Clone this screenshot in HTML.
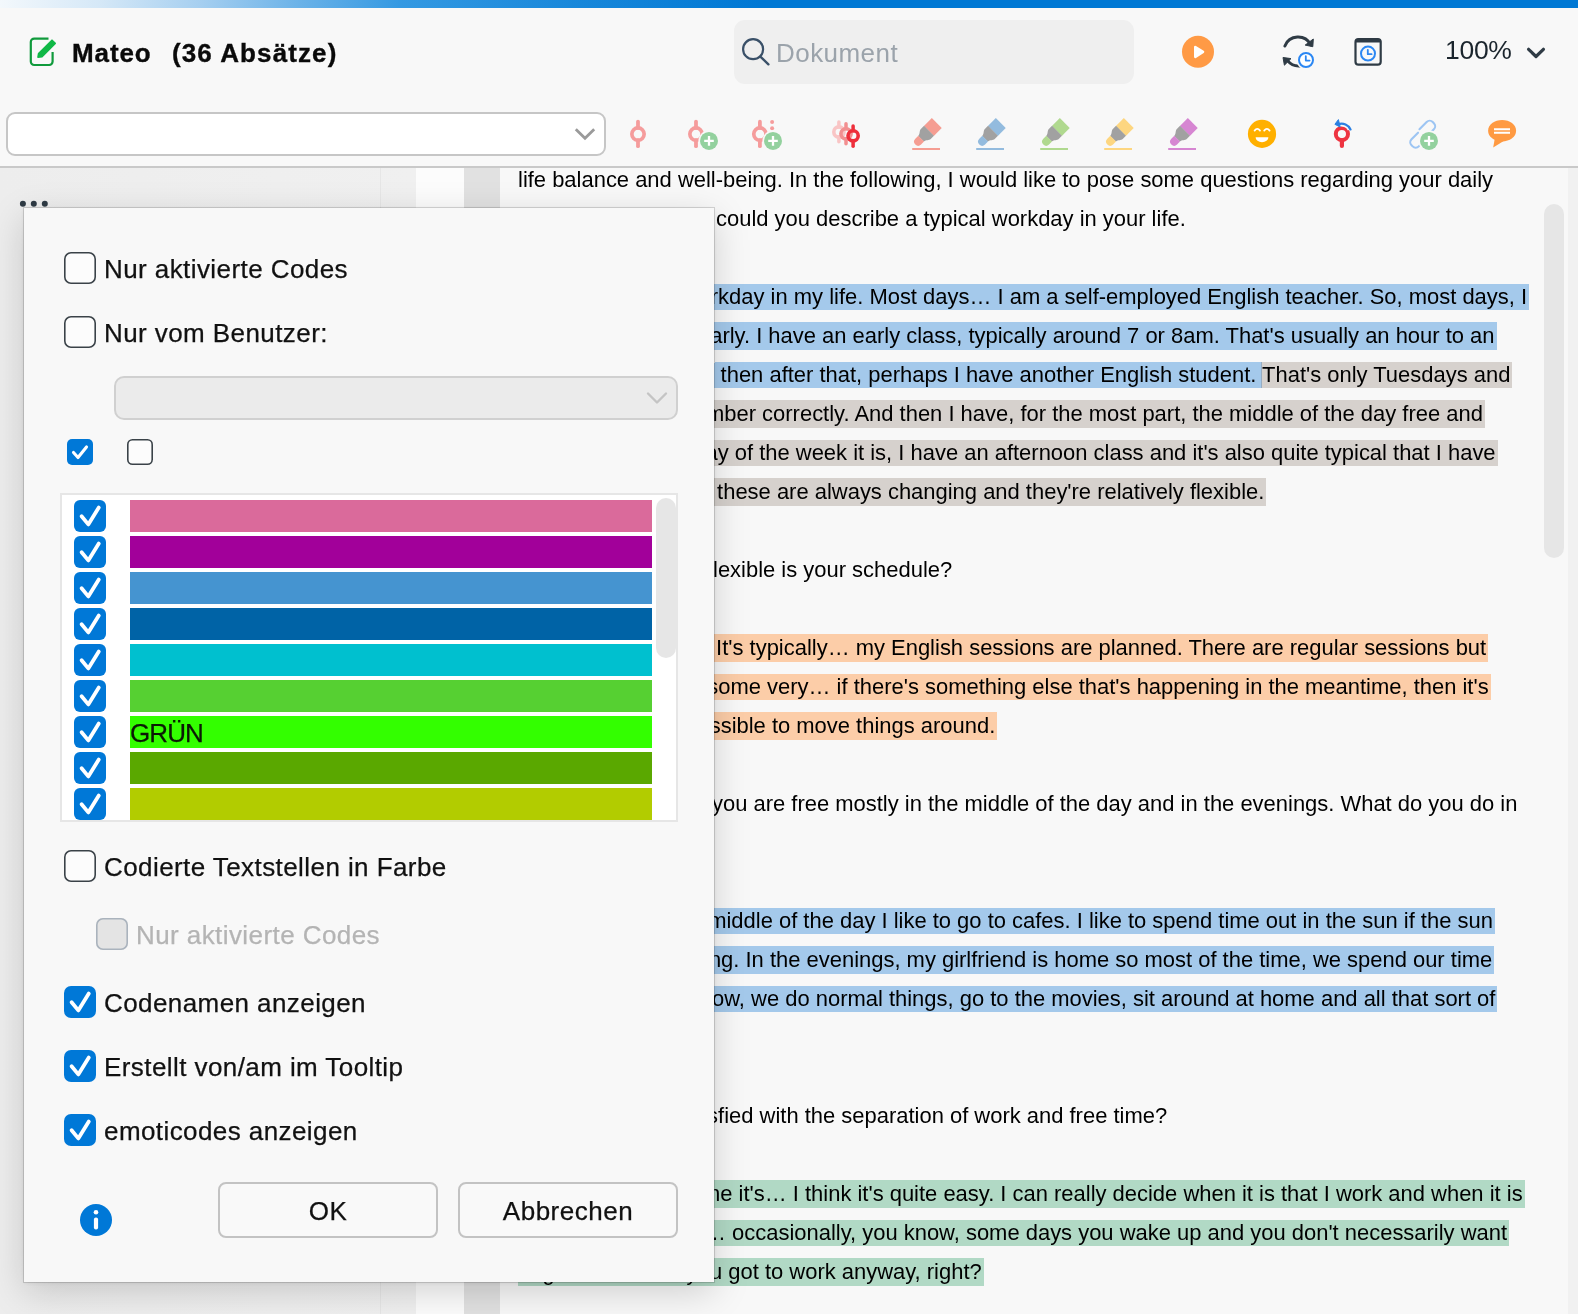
<!DOCTYPE html>
<html lang="de">
<head>
<meta charset="utf-8">
<title>Mateo</title>
<style>
*{box-sizing:border-box;margin:0;padding:0}
html,body{width:1578px;height:1314px;overflow:hidden;background:#f8f8f8;font-family:"Liberation Sans",sans-serif;color:#111}
.abs{position:absolute}
#doc,#dlg,.title,.ui{will-change:transform}
#topbar{left:0;top:0;width:1578px;height:8px;background:linear-gradient(90deg,#f3f8fc 0,#d5e8f7 100px,#a6cff0 200px,#6ab2e8 300px,#3499e2 400px,#1787da 580px,#0078d4 760px,#0078d4 100%)}
.title{top:38px;font-weight:bold;font-size:26px;line-height:30px;white-space:pre;color:#0a0a0a;-webkit-text-stroke:.35px #0a0a0a}
#search{left:734px;top:20px;width:400px;height:64px;border-radius:11px;background:#efefef}
.ui{font-size:26px;line-height:32px;white-space:pre;letter-spacing:.3px;color:#111}
#combo{left:6px;top:112px;width:600px;height:44px;border:2px solid #c6c6c6;border-radius:9px;background:#fff}
#divider{left:0;top:166px;width:1578px;height:2px;background:#c9c9c9}
/* panes under toolbar */
#leftpane{left:0;top:168px;width:416px;height:1146px;background:linear-gradient(90deg,#ededed 0,#f0f0f0 100%)}
#col1{left:380px;top:168px;width:1px;height:1146px;background:#e6e6e6}
#white{left:416px;top:168px;width:48px;height:1146px;background:#fcfcfc}
#gray{left:464px;top:168px;width:36px;height:1146px;background:#e1e1e1}
#doc{left:500px;top:168px;width:1078px;height:1146px;background:#f8f8f8;overflow:hidden}
.ln{position:absolute;left:18px;height:39px;line-height:39px;font-size:21.96px;white-space:pre;color:#000}
.ln .pre{display:inline-block;overflow:hidden;vertical-align:top;height:25.6px;line-height:25.6px;margin-top:7.7px}
.hb{background:#a4c9eb}.hg{background:#d6d1cd}.ho{background:#fccda8}.hgr{background:#b1d9c5}
.ln span.h{padding:0 0 1px 0}
.ln.o span.h{padding:1px 0 2px 0}
.ln span.hj{box-shadow:-1px 0 0 #98adc2}
.ln span.h:last-child{padding-right:2px}
.ln.o .pre{height:27.6px;line-height:27.6px;margin-top:6.7px}
#vscroll{left:1544px;top:204px;width:20px;height:354px;border-radius:10px;background:#e6e6e6}
#vtrack{left:1568px;top:168px;width:10px;height:1146px;background:#f1f1f1}
/* dialog */
#dlg{left:24px;top:208px;width:690px;height:1074px;background:#f8f8f8;box-shadow:0 0 0 1px rgba(0,0,0,.14),0 10px 34px rgba(0,0,0,.17),0 1px 5px rgba(0,0,0,.08)}
.cb{position:absolute;width:32px;height:32px;border-radius:7px;background:#fcfcfc;box-shadow:inset 0 0 0 1.6px #3a4248}
.cb.on{box-shadow:none;background:#0078d7}
.cb.dis{box-shadow:inset 0 0 0 1.6px #aab3bd;background:#e4e4e4}
.cb svg{position:absolute;left:0;top:0}
.lbl{position:absolute;margin-top:1px;-webkit-text-stroke:.25px currentColor;font-size:26px;line-height:32px;white-space:pre;letter-spacing:.42px;color:#111}
.btn{position:absolute;top:974px;width:220px;height:56px;border:2px solid #c3c3c3;border-radius:8px;background:#f9f9f9;text-align:center;font-size:26px;line-height:54px;letter-spacing:.5px;color:#111;-webkit-text-stroke:.25px #111}
#list{left:36px;top:285px;width:618px;height:329px;background:#fff;border:2px solid #e6e6e6;overflow:hidden}
.bar{position:absolute;left:68px;width:522px;height:32px}
.lcb{position:absolute;left:12px;width:32px;height:32px;border-radius:6px;background:#0078d7}
</style>
</head>
<body>
<div id="topbar" class="abs"></div>

<!-- title -->
<svg class="abs" style="left:28px;top:35px" width="32" height="33" viewBox="0 0 32 33"><path d="M20.5 3.6H6.2A3.4 3.4 0 0 0 2.8 7V26.6A3.4 3.4 0 0 0 6.2 30H21.2A3.4 3.4 0 0 0 24.6 26.6V17" fill="none" stroke="#109a3c" stroke-width="2.2" stroke-linecap="butt"/><path d="M10 22.2 10.6 18.6 24 5.2 27.2 8.4 14 21.6Z" fill="#10b846" stroke="#10b846" stroke-width="1.6" stroke-linejoin="round"/></svg>
<div class="abs title" style="left:72px;letter-spacing:.9px">Mateo</div>
<div class="abs title" style="left:172px;letter-spacing:1.1px">(36 Absätze)</div>

<!-- search -->
<div id="search" class="abs"></div>
<svg class="abs" style="left:740px;top:36px" width="32" height="32" viewBox="0 0 32 32"><circle cx="13.1" cy="13.2" r="10" fill="none" stroke="#3a5068" stroke-width="2.2"/><path d="M20.4 20.6 28.4 28.3" stroke="#3a5068" stroke-width="2.4" stroke-linecap="round"/></svg>
<div class="abs ui" style="left:776px;top:37px;color:#9ba3ab;letter-spacing:.45px">Dokument</div>

<div class="abs ui" style="left:1445px;top:34px;font-size:26.5px;letter-spacing:-.3px;color:#1b252d">100%</div>

<!-- combo -->
<div id="combo" class="abs"></div>
<svg class="abs" style="left:573px;top:125px" width="24" height="18" viewBox="0 0 24 18"><path d="M2.8 4.2 12 13.2 21.2 4.2" fill="none" stroke="#9a9a9a" stroke-width="2.8" stroke-linecap="butt" stroke-linejoin="miter"/></svg>

<!--ICONS-->
<svg class="abs" style="left:0;top:0" width="1578" height="166" viewBox="0 0 1578 166">
<circle cx="638.0" cy="134.1" r="6.15" fill="none" stroke="#f59c9c" stroke-width="3.70"/><path d="M638.0 121.7V127.9" stroke="#f59c9c" stroke-width="3.8" stroke-linecap="round"/><path d="M638.0 140.2V146.2" stroke="#f59c9c" stroke-width="3.8" stroke-linecap="round"/>
<circle cx="696.0" cy="134.1" r="6.15" fill="none" stroke="#f59c9c" stroke-width="3.70"/><path d="M696.0 121.7V127.9" stroke="#f59c9c" stroke-width="3.8" stroke-linecap="round"/><path d="M696.0 140.2V146.2" stroke="#f59c9c" stroke-width="3.8" stroke-linecap="round"/><circle cx="709.0" cy="140.9" r="10.6" fill="#f8f8f8"/><circle cx="709.0" cy="140.9" r="9" fill="#93d19e"/><path d="M704.2 140.9H713.8M709.0 136.1V145.7" stroke="#fff" stroke-width="2.3" stroke-linecap="butt"/>
<circle cx="759.9" cy="134.1" r="6.15" fill="none" stroke="#f59c9c" stroke-width="3.70"/><path d="M759.9 121.7V127.9" stroke="#f59c9c" stroke-width="3.8" stroke-linecap="round"/><path d="M759.9 140.2V146.2" stroke="#f59c9c" stroke-width="3.8" stroke-linecap="round"/><circle cx="772.1" cy="122.1" r="2" fill="#f59c9c"/><circle cx="772.1" cy="128.2" r="2" fill="#f59c9c"/><circle cx="773.0" cy="140.9" r="10.6" fill="#f8f8f8"/><circle cx="773.0" cy="140.9" r="9" fill="#93d19e"/><path d="M768.2 140.9H777.8M773.0 136.1V145.7" stroke="#fff" stroke-width="2.3" stroke-linecap="butt"/>
<circle cx="838.9" cy="132.0" r="5.10" fill="none" stroke="#f9c5c5" stroke-width="3.60"/><path d="M838.9 122.0V126.9" stroke="#f9c5c5" stroke-width="3.5" stroke-linecap="round"/><path d="M838.9 137.1V141.8" stroke="#f9c5c5" stroke-width="3.5" stroke-linecap="round"/>
<circle cx="846.0" cy="133.8" r="5.10" fill="none" stroke="#f28f90" stroke-width="3.60"/><path d="M846.0 123.8V128.7" stroke="#f28f90" stroke-width="3.5" stroke-linecap="round"/><path d="M846.0 138.9V143.8" stroke="#f28f90" stroke-width="3.5" stroke-linecap="round"/>
<circle cx="853.1" cy="135.8" r="5.10" fill="none" stroke="#ee2f3b" stroke-width="3.60"/><path d="M853.1 126.0V130.7" stroke="#ee2f3b" stroke-width="3.5" stroke-linecap="round"/><path d="M853.1 140.9V146.2" stroke="#ee2f3b" stroke-width="3.5" stroke-linecap="round"/>
<g transform="translate(929.0 130.8) rotate(45)"><rect x="-7" y="-11" width="14" height="11.2" fill="#f59d92"/><path d="M-7 0H7V4.2C7 7.4 4 8 4 11.3H-4C-4 8 -7 7.4 -7 4.2Z" fill="#a1a1a1"/><path d="M-4.05 11.1H4.05V15.3A4.05 4.05 0 0 1 -4.05 15.3Z" fill="#f59d92"/></g><rect x="912.2" y="148" width="27.8" height="2" fill="#f59d92"/>
<g transform="translate(993.0 130.8) rotate(45)"><rect x="-7" y="-11" width="14" height="11.2" fill="#93bbde"/><path d="M-7 0H7V4.2C7 7.4 4 8 4 11.3H-4C-4 8 -7 7.4 -7 4.2Z" fill="#a1a1a1"/><path d="M-4.05 11.1H4.05V15.3A4.05 4.05 0 0 1 -4.05 15.3Z" fill="#93bbde"/></g><rect x="976.2" y="148" width="27.8" height="2" fill="#93bbde"/>
<g transform="translate(1057.0 130.8) rotate(45)"><rect x="-7" y="-11" width="14" height="11.2" fill="#b0d98f"/><path d="M-7 0H7V4.2C7 7.4 4 8 4 11.3H-4C-4 8 -7 7.4 -7 4.2Z" fill="#a1a1a1"/><path d="M-4.05 11.1H4.05V15.3A4.05 4.05 0 0 1 -4.05 15.3Z" fill="#b0d98f"/></g><rect x="1040.2" y="148" width="27.8" height="2" fill="#b0d98f"/>
<g transform="translate(1121.0 130.8) rotate(45)"><rect x="-7" y="-11" width="14" height="11.2" fill="#fdd680"/><path d="M-7 0H7V4.2C7 7.4 4 8 4 11.3H-4C-4 8 -7 7.4 -7 4.2Z" fill="#a1a1a1"/><path d="M-4.05 11.1H4.05V15.3A4.05 4.05 0 0 1 -4.05 15.3Z" fill="#fdd680"/></g><rect x="1104.2" y="148" width="27.8" height="2" fill="#fdd680"/>
<g transform="translate(1185.0 130.8) rotate(45)"><rect x="-7" y="-11" width="14" height="11.2" fill="#d686d2"/><path d="M-7 0H7V4.2C7 7.4 4 8 4 11.3H-4C-4 8 -7 7.4 -7 4.2Z" fill="#a1a1a1"/><path d="M-4.05 11.1H4.05V15.3A4.05 4.05 0 0 1 -4.05 15.3Z" fill="#d686d2"/></g><rect x="1168.2" y="148" width="27.8" height="2" fill="#d686d2"/>
<circle cx="1262" cy="133.9" r="14.1" fill="#ffb000"/><path d="M1255.6 137.3H1268.4A6.4 4.9 0 0 1 1255.6 137.3Z" fill="#fff"/><path d="M1254.6 130.6Q1257.3 127.2 1260 130.6M1264.2 130.6Q1266.9 127.2 1269.6 130.6" fill="none" stroke="#fff" stroke-width="1.8" stroke-linecap="round"/>
<circle cx="1341.9" cy="134.1" r="6.10" fill="none" stroke="#ee3441" stroke-width="4.00"/><path d="M1341.9 140.2V145.9" stroke="#ee3441" stroke-width="4.2" stroke-linecap="round"/>
<path d="M1350.3 129.2A10 10 0 0 0 1338.2 124.3" fill="none" stroke="#f8f8f8" stroke-width="5.4"/><path d="M1350.5 129.4A10 10 0 0 0 1338.6 124.1" fill="none" stroke="#2b80e2" stroke-width="2.3" stroke-linecap="round"/><path d="M1334.9 124.3 1338.4 119.6 1340.2 127Z" fill="#2b80e2" stroke="#2b80e2" stroke-width="1" stroke-linejoin="round"/>
<g transform="translate(1428.0 127.9) rotate(45)" fill="none" stroke="#9dc5f3" stroke-width="2.1" stroke-linecap="round"><path d="M-5.1 7V-3.2A4.3 4.3 0 0 1 -0.8 -7.5H0.8A4.3 4.3 0 0 1 5.1 -3.2V5"/></g>
<g transform="translate(1417.4 140.5) rotate(45)" fill="none" stroke="#9dc5f3" stroke-width="2.1" stroke-linecap="round"><path d="M-5.1 -6V3.2A4.3 4.3 0 0 0 -0.8 7.5H0.8A4.3 4.3 0 0 0 5.1 3.2V-2"/></g>
<circle cx="1429.0" cy="140.9" r="10.6" fill="#f8f8f8"/><circle cx="1429.0" cy="140.9" r="9" fill="#93d19e"/><path d="M1424.2 140.9H1433.8M1429.0 136.1V145.7" stroke="#fff" stroke-width="2.3" stroke-linecap="butt"/>
<ellipse cx="1502.1" cy="130.7" rx="14" ry="10.8" fill="#ff9a42"/><path d="M1494.6 139.5 1493.2 147.5 1504.5 140.6Z" fill="#ff9a42"/><path d="M1494 129.2H1510M1494 132.8H1510" stroke="#fff" stroke-width="2.1"/>
<circle cx="1198" cy="51.8" r="16" fill="#ff9a45"/><path d="M1195.3 47.1 1203 51.9 1195.3 56.8Z" fill="#fff" stroke="#fff" stroke-width="2.6" stroke-linejoin="round"/>
<g fill="none" stroke="#2f3b45" stroke-width="3" stroke-linecap="round"><path d="M1284.9 46A14.2 14.2 0 0 1 1310.6 44.6"/><path d="M1287.6 60.6A14.2 14.2 0 0 0 1299.5 66"/></g>
<path d="M1313.3 39 1312.8 46.7 1305.2 45.1Z" fill="#2f3b45" stroke="#2f3b45" stroke-width="1" stroke-linejoin="round"/>
<path d="M1283 57.5 1291 58.6 1284.4 65.2Z" fill="#2f3b45" stroke="#2f3b45" stroke-width="1" stroke-linejoin="round"/>
<circle cx="1306" cy="60" r="9.6" fill="#f8f8f8"/><circle cx="1306" cy="60" r="7" fill="#fff" stroke="#2b87f3" stroke-width="2"/><path d="M1305.8 56.2V60.6H1309.6" fill="none" stroke="#2b87f3" stroke-width="1.8" stroke-linecap="round" stroke-linejoin="round"/>
<rect x="1355.5" y="39.1" width="25.2" height="25.6" rx="3" fill="none" stroke="#2f3b45" stroke-width="2.2"/><path d="M1355.5 42V41.6A2.6 2.6 0 0 1 1358.1 39H1378.1A2.6 2.6 0 0 1 1380.7 41.6V42Z" fill="#2f3b45" stroke="#2f3b45" stroke-width="1"/>
<circle cx="1368" cy="53.6" r="7" fill="none" stroke="#2b87f3" stroke-width="2"/><path d="M1367.8 49.8V54.2H1371.6" fill="none" stroke="#2b87f3" stroke-width="1.8" stroke-linecap="round" stroke-linejoin="round"/>
<path d="M1528.6 49.3 1536 56.5 1543.4 49.3" fill="none" stroke="#2f3b45" stroke-width="3.2" stroke-linecap="round" stroke-linejoin="round"/>
</svg>
<!--/ICONS-->
<div id="divider" class="abs"></div>
<div id="leftpane" class="abs"></div>
<div id="col1" class="abs"></div>
<div id="white" class="abs"></div>
<div id="gray" class="abs"></div>
<div id="doc" class="abs">
<!--DOC-->
<div class="ln o" style="top:-8px"><span>life balance and well-being. In the following, I would like to pose some questions regarding your daily</span></div>
<div class="ln" style="top:31px"><span class="pre " style="width:198.0px">lives. To start things off, </span><span>could you describe a typical workday in your life.</span></div>
<div class="ln" style="top:109px"><span class="pre hb" style="width:192.8px">R: So, a typical wo</span><span class="h hb">rkday in my life. Most days… I am a self-employed English teacher. So, most days, I</span></div>
<div class="ln o" style="top:148px"><span class="pre hb" style="width:192.2px">wake up relatively e</span><span class="h hb">arly. I have an early class, typically around 7 or 8am. That's usually an hour to an</span></div>
<div class="ln" style="top:187px"><span class="pre hb" style="width:196.5px">hour and a half. And</span><span class="h hb"> then after that, perhaps I have another English student. </span><span class="h hg hj">That's only Tuesdays and</span></div>
<div class="ln o" style="top:226px"><span class="pre hg" style="width:188.0px">Thursdays, if I reme</span><span class="h hg">mber correctly. And then I have, for the most part, the middle of the day free and</span></div>
<div class="ln" style="top:265px"><span class="pre hg" style="width:187.5px">depending on what d</span><span class="h hg">ay of the week it is, I have an afternoon class and it's also quite typical that I have</span></div>
<div class="ln o" style="top:304px"><span class="pre hg" style="width:193.0px">evening classes. But</span><span class="h hg"> these are always changing and they're relatively flexible.</span></div>
<div class="ln o" style="top:382px"><span class="pre " style="width:195.0px">I: Okay. And how f</span><span>lexible is your schedule?</span></div>
<div class="ln o" style="top:460px"><span class="pre ho" style="width:192.0px">R: Quite flexible.</span><span class="h ho"> It's typically… my English sessions are planned. There are regular sessions but</span></div>
<div class="ln" style="top:499px"><span class="pre ho" style="width:189.3px">then there are al</span><span class="h ho">some very… if there's something else that's happening in the meantime, then it's</span></div>
<div class="ln o" style="top:538px"><span class="pre ho" style="width:191.7px">usually quite po</span><span class="h ho">ssible to move things around.</span></div>
<div class="ln o" style="top:616px"><span class="pre " style="width:194.0px">I: So you said that </span><span>you are free mostly in the middle of the day and in the evenings. What do you do in</span></div>
<div class="ln" style="top:655px"><span>your free time?</span></div>
<div class="ln" style="top:733px"><span class="pre hb" style="width:190.2px">R: Well, in the </span><span class="h hb">middle of the day I like to go to cafes. I like to spend time out in the sun if the sun</span></div>
<div class="ln o" style="top:772px"><span class="pre hb" style="width:190.9px">happens to be shini</span><span class="h hb">ng. In the evenings, my girlfriend is home so most of the time, we spend our time</span></div>
<div class="ln" style="top:811px"><span class="pre hb" style="width:194.0px">together. You kn</span><span class="h hb">ow, we do normal things, go to the movies, sit around at home and all that sort of</span></div>
<div class="ln o" style="top:850px"><span class="h hb">stuff.</span></div>
<div class="ln o" style="top:928px"><span class="pre " style="width:189.1px">I: Are you sati</span><span>sfied with the separation of work and free time?</span></div>
<div class="ln o" style="top:1006px"><span class="pre hgr" style="width:184.0px">R: Yes, for m</span><span class="h hgr">me it's… I think it's quite easy. I can really decide when it is that I work and when it is</span></div>
<div class="ln" style="top:1045px"><span class="pre hgr" style="width:186.0px">that I don't. But</span><span class="h hgr">… occasionally, you know, some days you wake up and you don't necessarily want</span></div>
<div class="ln o" style="top:1084px"><span class="pre hgr" style="width:192.0px">to go to work but yo</span><span class="h hgr">u got to work anyway, right?</span></div>
<!--/DOC-->
</div>
<div id="vtrack" class="abs"></div>
<div id="vscroll" class="abs"></div>

<!-- three dots -->
<svg class="abs" style="left:18px;top:198px" width="34" height="12" viewBox="0 0 34 12"><circle cx="4.9" cy="5.8" r="3" fill="#2f3b45"/><circle cx="15.8" cy="5.8" r="3" fill="#2f3b45"/><circle cx="26.8" cy="5.8" r="3" fill="#2f3b45"/></svg>

<div id="dlg" class="abs">
<!--DLG-->
<div class="cb" style="left:40px;top:44px"></div>
<div class="lbl" style="left:80px;top:44px;">Nur aktivierte Codes</div>
<div class="cb" style="left:40px;top:108px"></div>
<div class="lbl" style="left:80px;top:108px;">Nur vom Benutzer:</div>
<div class="abs" style="left:90px;top:168px;width:564px;height:44px;border:2px solid #d0d0d0;border-radius:10px;background:#ebebeb"></div>
<svg class="abs" style="left:621px;top:181px" width="24" height="18" viewBox="0 0 24 18"><path d="M3 4.5 12 13.5 21 4.5" fill="none" stroke="#c4c4c4" stroke-width="2.4" stroke-linecap="round" stroke-linejoin="round"/></svg>
<div class="abs" style="left:43px;top:231px;width:26px;height:26px;border-radius:5px;background:#0078d7"><svg width="26" height="26" viewBox="0 0 26 26"><path d="M6.5 13.5 11 18.5 19.5 8" fill="none" stroke="#fff" stroke-width="3.1" stroke-linecap="round" stroke-linejoin="round"/></svg></div>
<div class="abs" style="left:103px;top:231px;width:26px;height:26px;border-radius:5.5px;box-shadow:inset 0 0 0 1.6px #3a4248;background:#fcfcfc"></div>
<div id="list" class="abs">
<div class="lcb" style="top:5px"><svg width="32" height="32" viewBox="0 0 32 32"><path d="M7.6 16.3 14.3 24.4 24.8 7.5" fill="none" stroke="#fff" stroke-width="3.8" stroke-linecap="round" stroke-linejoin="round"/></svg></div>
<div class="bar" style="top:5px;background:#da6a9b"></div>
<div class="lcb" style="top:41px"><svg width="32" height="32" viewBox="0 0 32 32"><path d="M7.6 16.3 14.3 24.4 24.8 7.5" fill="none" stroke="#fff" stroke-width="3.8" stroke-linecap="round" stroke-linejoin="round"/></svg></div>
<div class="bar" style="top:41px;background:#a2009a"></div>
<div class="lcb" style="top:77px"><svg width="32" height="32" viewBox="0 0 32 32"><path d="M7.6 16.3 14.3 24.4 24.8 7.5" fill="none" stroke="#fff" stroke-width="3.8" stroke-linecap="round" stroke-linejoin="round"/></svg></div>
<div class="bar" style="top:77px;background:#4594d0"></div>
<div class="lcb" style="top:113px"><svg width="32" height="32" viewBox="0 0 32 32"><path d="M7.6 16.3 14.3 24.4 24.8 7.5" fill="none" stroke="#fff" stroke-width="3.8" stroke-linecap="round" stroke-linejoin="round"/></svg></div>
<div class="bar" style="top:113px;background:#0063a6"></div>
<div class="lcb" style="top:149px"><svg width="32" height="32" viewBox="0 0 32 32"><path d="M7.6 16.3 14.3 24.4 24.8 7.5" fill="none" stroke="#fff" stroke-width="3.8" stroke-linecap="round" stroke-linejoin="round"/></svg></div>
<div class="bar" style="top:149px;background:#00c0cf"></div>
<div class="lcb" style="top:185px"><svg width="32" height="32" viewBox="0 0 32 32"><path d="M7.6 16.3 14.3 24.4 24.8 7.5" fill="none" stroke="#fff" stroke-width="3.8" stroke-linecap="round" stroke-linejoin="round"/></svg></div>
<div class="bar" style="top:185px;background:#56d032"></div>
<div class="lcb" style="top:221px"><svg width="32" height="32" viewBox="0 0 32 32"><path d="M7.6 16.3 14.3 24.4 24.8 7.5" fill="none" stroke="#fff" stroke-width="3.8" stroke-linecap="round" stroke-linejoin="round"/></svg></div>
<div class="bar" style="top:221px;background:#33ff00"><span style="position:absolute;left:0;top:.5px;font-size:26px;line-height:32px;letter-spacing:-.9px;color:#0b1a05;-webkit-text-stroke:.25px #0b1a05">GRÜN</span></div>
<div class="lcb" style="top:257px"><svg width="32" height="32" viewBox="0 0 32 32"><path d="M7.6 16.3 14.3 24.4 24.8 7.5" fill="none" stroke="#fff" stroke-width="3.8" stroke-linecap="round" stroke-linejoin="round"/></svg></div>
<div class="bar" style="top:257px;background:#5aa800"></div>
<div class="lcb" style="top:293px"><svg width="32" height="32" viewBox="0 0 32 32"><path d="M7.6 16.3 14.3 24.4 24.8 7.5" fill="none" stroke="#fff" stroke-width="3.8" stroke-linecap="round" stroke-linejoin="round"/></svg></div>
<div class="bar" style="top:293px;background:#b2cc00"></div>
<div class="abs" style="left:594px;top:3px;width:20px;height:160px;border-radius:10px;background:#e6e6e6"></div>
</div>
<div class="cb" style="left:40px;top:642px"></div>
<div class="lbl" style="left:80px;top:642px;">Codierte Textstellen in Farbe</div>
<div class="cb dis" style="left:72px;top:710px"></div>
<div class="lbl" style="left:112px;top:710px;color:#b4b4b4">Nur aktivierte Codes</div>
<div class="cb on" style="left:40px;top:778px"><svg width="32" height="32" viewBox="0 0 32 32"><path d="M7.6 16.3 14.3 24.4 24.8 7.5" fill="none" stroke="#fff" stroke-width="3.8" stroke-linecap="round" stroke-linejoin="round"/></svg></div>
<div class="lbl" style="left:80px;top:778px;">Codenamen anzeigen</div>
<div class="cb on" style="left:40px;top:842px"><svg width="32" height="32" viewBox="0 0 32 32"><path d="M7.6 16.3 14.3 24.4 24.8 7.5" fill="none" stroke="#fff" stroke-width="3.8" stroke-linecap="round" stroke-linejoin="round"/></svg></div>
<div class="lbl" style="left:80px;top:842px;">Erstellt von/am im Tooltip</div>
<div class="cb on" style="left:40px;top:906px"><svg width="32" height="32" viewBox="0 0 32 32"><path d="M7.6 16.3 14.3 24.4 24.8 7.5" fill="none" stroke="#fff" stroke-width="3.8" stroke-linecap="round" stroke-linejoin="round"/></svg></div>
<div class="lbl" style="left:80px;top:906px;">emoticodes anzeigen</div>
<svg class="abs" style="left:55px;top:995px" width="34" height="34" viewBox="0 0 34 34"><circle cx="17" cy="17" r="16" fill="#0078d7"/><circle cx="17" cy="9.2" r="2.3" fill="#fff"/><rect x="14.9" y="14.6" width="4.2" height="12" rx="2" fill="#fff"/></svg>
<div class="btn" style="left:194px">OK</div>
<div class="btn" style="left:434px">Abbrechen</div>
<!--/DLG-->
</div>
</body>
</html>
